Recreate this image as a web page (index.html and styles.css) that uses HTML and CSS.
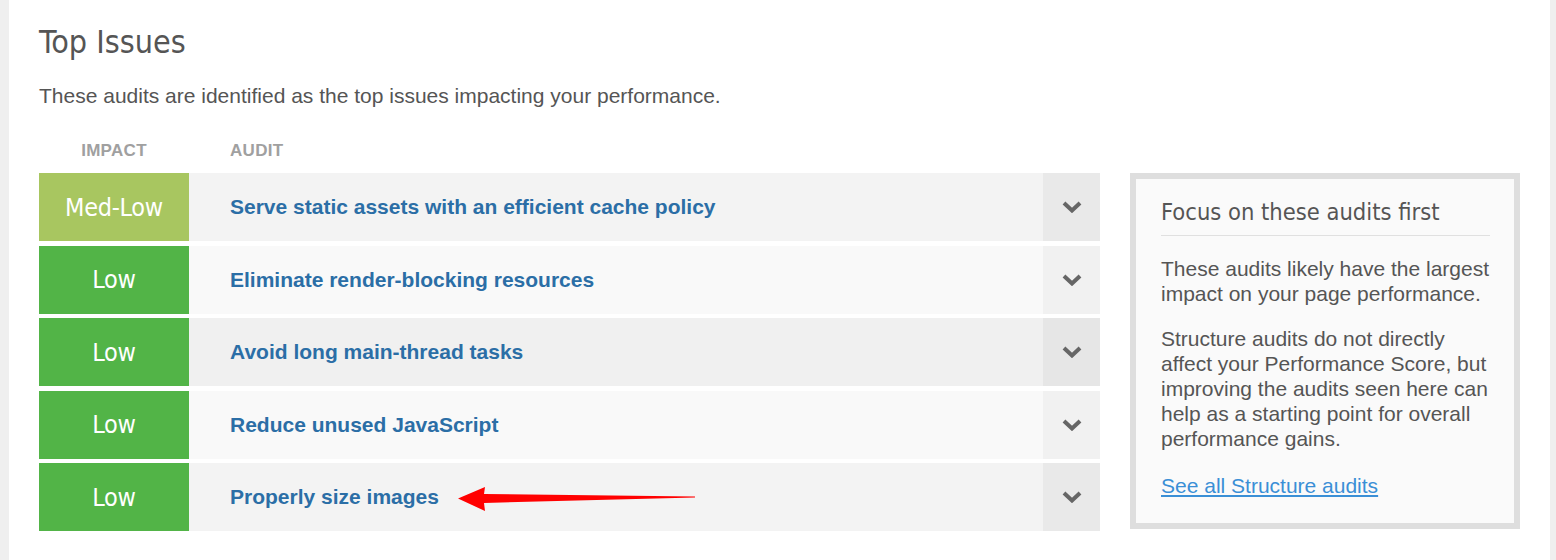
FILE: index.html
```html
<!DOCTYPE html>
<html>
<head>
<meta charset="utf-8">
<link rel="stylesheet" href="styles.css">
</head>
<body>
<div class="page">
  <div class="content">
    <main class="main">
      <h1 class="title">Top Issues</h1>
      <p class="intro">These audits are identified as the top issues impacting your performance.</p>
      <div class="thead">
        <div class="th th-impact">IMPACT</div>
        <div class="th th-audit">AUDIT</div>
      </div>
      <div class="rows">
        <div class="row r1">
          <div class="impact medlow">Med-Low</div>
          <div class="audit">Serve static assets with an efficient cache policy</div>
          <div class="chev"><svg width="20" height="12" viewBox="0 0 20 12"><polyline points="2,2 10,9.5 18,2" fill="none" stroke="#666" stroke-width="4"/></svg></div>
        </div>
        <div class="row r2">
          <div class="impact low">Low</div>
          <div class="audit">Eliminate render-blocking resources</div>
          <div class="chev"><svg width="20" height="12" viewBox="0 0 20 12"><polyline points="2,2 10,9.5 18,2" fill="none" stroke="#666" stroke-width="4"/></svg></div>
        </div>
        <div class="row r3">
          <div class="impact low">Low</div>
          <div class="audit">Avoid long main-thread tasks</div>
          <div class="chev"><svg width="20" height="12" viewBox="0 0 20 12"><polyline points="2,2 10,9.5 18,2" fill="none" stroke="#666" stroke-width="4"/></svg></div>
        </div>
        <div class="row r4">
          <div class="impact low">Low</div>
          <div class="audit">Reduce unused JavaScript</div>
          <div class="chev"><svg width="20" height="12" viewBox="0 0 20 12"><polyline points="2,2 10,9.5 18,2" fill="none" stroke="#666" stroke-width="4"/></svg></div>
        </div>
        <div class="row r5">
          <div class="impact low">Low</div>
          <div class="audit"><span class="audit-text">Properly size images</span>
            <svg class="arrow" width="240" height="28" viewBox="0 0 240 28"><polygon points="0,13.5 27,2 26,9 237,11.5 237,12.5 26,18 27,26" fill="#ff0000"/></svg>
          </div>
          <div class="chev"><svg width="20" height="12" viewBox="0 0 20 12"><polyline points="2,2 10,9.5 18,2" fill="none" stroke="#666" stroke-width="4"/></svg></div>
        </div>
      </div>
    </main>
    <aside class="side">
      <div class="side-inner">
        <h2 class="side-title">Focus on these audits first</h2>
        <p class="side-p">These audits likely have the largest impact on your page performance.</p>
        <p class="side-p">Structure audits do not directly affect your Performance Score, but improving the audits seen here can help as a starting point for overall performance gains.</p>
        <a class="side-link" href="#">See all Structure audits</a>
      </div>
    </aside>
  </div>
</div>
</body>
</html>
```
FILE: styles.css
```css
html, body {
  margin: 0;
  padding: 0;
}
body {
  background: #efefef;
  font-family: "Liberation Sans", Arial, sans-serif;
  color: #555;
}
.page {
  margin: 0 6px 0 9px;
  background: #fff;
  height: 560px;
}
.content {
  display: flex;
  padding: 0 30px;
  gap: 30px;
}
.main {
  width: 1061px;
  flex: none;
}
.title {
  margin: 0;
  padding-top: 22px;
  font-family: "DejaVu Sans Condensed", "DejaVu Sans", sans-serif;
  font-weight: normal;
  font-size: 32px;
  line-height: 40px;
  color: #555;
}
.intro {
  margin: 21px 0 0;
  font-size: 21px;
  line-height: 25px;
  color: #555;
}
.thead {
  display: flex;
  margin-top: 21px;
  height: 44px;
  align-items: center;
  font-weight: bold;
  font-size: 17px;
  color: #a0a0a0;
  letter-spacing: 0.3px;
}
.th-impact {
  width: 150px;
  text-align: center;
}
.th-audit {
  padding-left: 41px;
}
.rows {
  display: flex;
  flex-direction: column;
  gap: 4.5px;
}
.row {
  display: flex;
  height: 68px;
}
.impact {
  width: 150px;
  flex: none;
  display: flex;
  align-items: center;
  justify-content: center;
  color: #fff;
  font-family: "DejaVu Sans Condensed", "DejaVu Sans", sans-serif;
  font-size: 25px;
  letter-spacing: -0.3px;
}
.medlow { background: #a8c660; }
.low { background: #52b447; }
.audit {
  flex: 1;
  display: flex;
  align-items: center;
  padding-left: 41px;
  font-weight: bold;
  font-size: 21px;
  color: #2b6ea6;
  position: relative;
}
.chev {
  width: 57px;
  flex: none;
  display: flex;
  align-items: center;
  justify-content: center;
}
.r1 .audit, .r5 .audit { background: #f3f3f3; }
.r1 .chev, .r5 .chev { background: #e9e9e9; }
.r2 .audit, .r4 .audit { background: #f9f9f9; }
.r2 .chev, .r4 .chev { background: #f1f1f1; }
.r3 .audit { background: #f0f0f0; }
.r3 .chev { background: #e6e6e6; }
.arrow {
  position: absolute;
  left: 269px;
  top: 22px;
}
.side {
  width: 390px;
  flex: none;
  margin-top: 173px;
  height: 356px;
  box-sizing: border-box;
  border: 6px solid #dedede;
  background: #fafafa;
}
.side-inner {
  padding: 15px 24px 0 25px;
}
.side-title {
  margin: 0;
  font-family: "DejaVu Sans Condensed", "DejaVu Sans", sans-serif;
  font-weight: normal;
  font-size: 23.5px;
  line-height: 36px;
  color: #555;
  padding-bottom: 5px;
  border-bottom: 1px solid #e0e0e0;
}
.side-p {
  margin: 20px 0 0;
  font-size: 21px;
  line-height: 25px;
  color: #555;
}
.side-p + .side-p {
  margin-top: 20px;
}
.side-link {
  display: inline-block;
  margin-top: 22px;
  font-size: 21px;
  line-height: 25px;
  color: #3a8fd6;
}
```
